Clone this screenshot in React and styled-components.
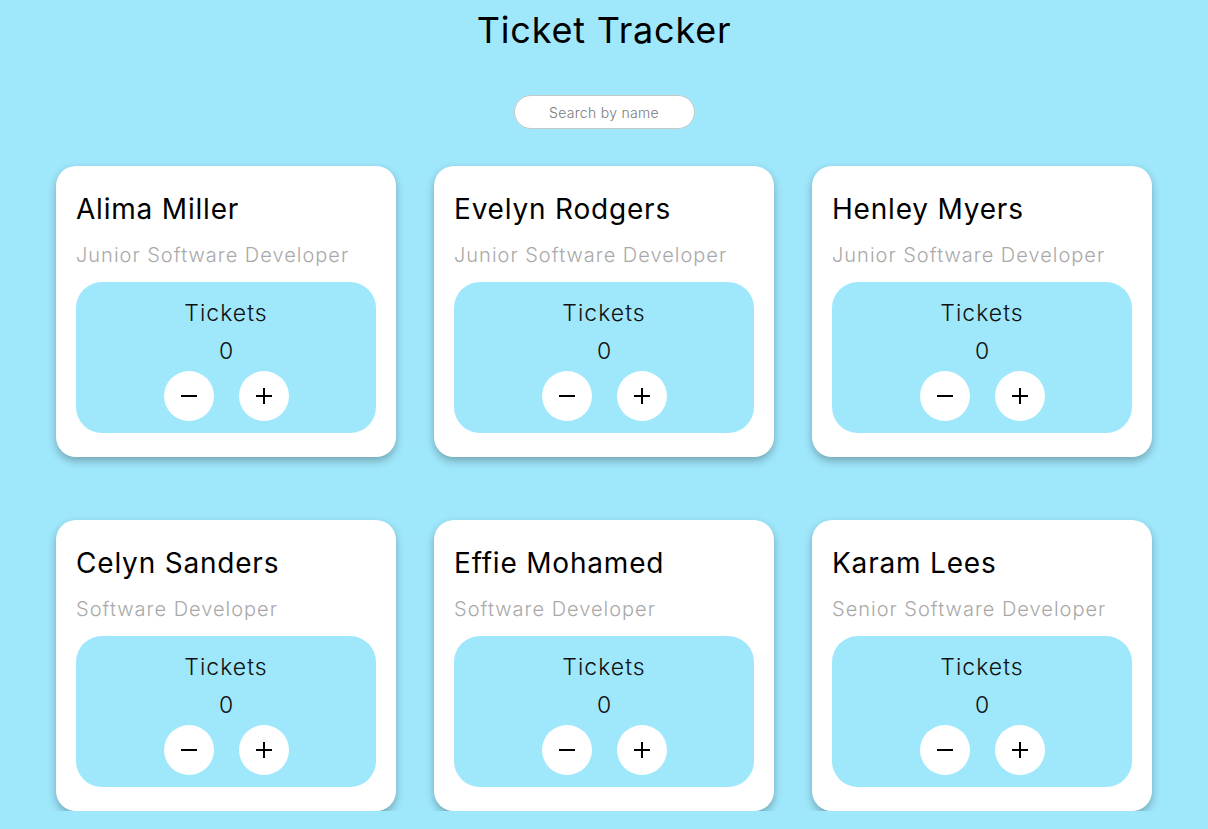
import React, { useState } from 'react';
import styled, { createGlobalStyle } from 'styled-components';

const GlobalStyle = createGlobalStyle`
  body {
    margin: 0;
    background-color: #9fe7fb;
    font-family: Inter, "Noto Sans", sans-serif;
  }
`;

const Page = styled.div`
  display: flex;
  flex-direction: column;
  align-items: center;
  padding-top: 8px;
`;

const Title = styled.h1`
  margin: 0;
  font-size: 36px;
  font-weight: 400;
  letter-spacing: 0.8px;
  color: #000;
  line-height: 44px;
`;

const Search = styled.input`
  margin-top: 43px;
  width: 181px;
  height: 34px;
  box-sizing: border-box;
  border: 1px solid #c8c8c8;
  border-radius: 17px;
  background: #fff;
  text-align: center;
  font-family: Inter, "Noto Sans", sans-serif;
  font-size: 14px;
  font-weight: 300;
  letter-spacing: 0.3px;
  color: #555;
  outline: none;
  &::placeholder {
    color: #7a7a7a;
  }
`;

const Grid = styled.div`
  margin-top: 37px;
  display: grid;
  grid-template-columns: repeat(3, 340px);
  column-gap: 38px;
  row-gap: 63px;
`;

const Card = styled.div`
  background: #fff;
  border-radius: 20px;
  padding: 26px 20px 24px;
  box-shadow: 0 4px 9px rgba(0, 0, 0, 0.28);
`;

const Name = styled.h2`
  margin: 0;
  font-size: 28px;
  font-weight: 400;
  letter-spacing: 0.8px;
  line-height: 34px;
  color: #000;
`;

const Role = styled.div`
  margin-top: 16px;
  font-size: 20px;
  font-weight: 300;
  letter-spacing: 1px;
  color: #a9a9a9;
  line-height: 26px;
`;

const Counter = styled.div`
  margin-top: 14px;
  background: #9fe7fb;
  border-radius: 26px;
  padding: 16px 0 12px;
  display: flex;
  flex-direction: column;
  align-items: center;
`;

const Label = styled.div`
  font-size: 23px;
  font-weight: 300;
  letter-spacing: 1px;
  line-height: 30px;
  color: #111;
`;

const Count = styled.div`
  margin-top: 11px;
  font-size: 23px;
  font-weight: 300;
  line-height: 24px;
  color: #111;
`;

const Buttons = styled.div`
  margin-top: 8px;
  display: flex;
  gap: 25px;
`;

const RoundButton = styled.button`
  width: 50px;
  height: 50px;
  border-radius: 50%;
  border: none;
  background: #fff;
  display: flex;
  align-items: center;
  justify-content: center;
  padding: 0;
  cursor: pointer;
`;

const Icon = ({ plus }) => (
  <svg width="18" height="18" viewBox="0 0 18 18" stroke="#000" strokeWidth="2">
    <line x1="1" y1="9" x2="17" y2="9" />
    {plus && <line x1="9" y1="1" x2="9" y2="17" />}
  </svg>
);

const people = [
  { name: 'Alima Miller', role: 'Junior Software Developer' },
  { name: 'Evelyn Rodgers', role: 'Junior Software Developer' },
  { name: 'Henley Myers', role: 'Junior Software Developer' },
  { name: 'Celyn Sanders', role: 'Software Developer' },
  { name: 'Effie Mohamed', role: 'Software Developer' },
  { name: 'Karam Lees', role: 'Senior Software Developer' },
];

function PersonCard({ name, role }) {
  const [tickets, setTickets] = useState(0);
  return (
    <Card>
      <Name>{name}</Name>
      <Role>{role}</Role>
      <Counter>
        <Label>Tickets</Label>
        <Count>{tickets}</Count>
        <Buttons>
          <RoundButton onClick={() => setTickets(Math.max(0, tickets - 1))}>
            <Icon />
          </RoundButton>
          <RoundButton onClick={() => setTickets(tickets + 1)}>
            <Icon plus />
          </RoundButton>
        </Buttons>
      </Counter>
    </Card>
  );
}

export default function App() {
  const [query, setQuery] = useState('');
  const shown = people.filter((p) =>
    p.name.toLowerCase().includes(query.toLowerCase())
  );
  return (
    <Page>
      <GlobalStyle />
      <Title>Ticket Tracker</Title>
      <Search
        placeholder="Search by name"
        value={query}
        onChange={(e) => setQuery(e.target.value)}
      />
      <Grid>
        {shown.map((p) => (
          <PersonCard key={p.name} {...p} />
        ))}
      </Grid>
    </Page>
  );
}
